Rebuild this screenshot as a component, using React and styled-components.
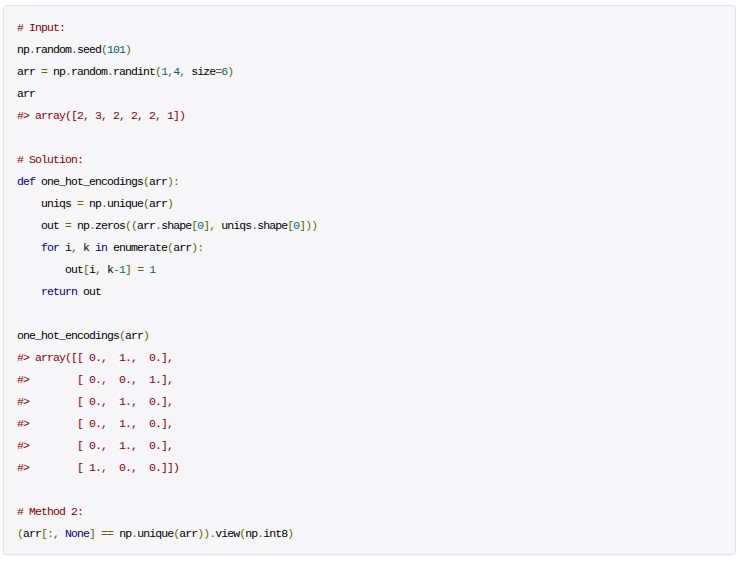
import React from 'react'
import styled, { createGlobalStyle } from 'styled-components'

const GlobalStyle = createGlobalStyle`
  body {
    margin: 0;
    background: #ffffff;
  }
`

const Page = styled.div`
  padding: 5px 4px 6px 3px;
`

const CodeBlock = styled.div`
  padding: 10px 13px;
  background: #f6f6f8;
  border: 1px solid #e1e1e6;
  border-radius: 4px;
  box-shadow: 0 1px 1px rgba(0, 0, 0, 0.04);
  font-family: "Liberation Mono", "DejaVu Sans Mono", monospace;
  font-size: 11.5px;
  letter-spacing: -0.9px;
  line-height: 22px;
  color: #000000;
  white-space: pre;
`

const Line = styled.div`
  height: 22px;
  padding-top: 1px;
  box-sizing: border-box;
`

const colors = {
  com: '#880000',
  kwd: '#000088',
  pun: '#666600',
  lit: '#006666',
  pln: '#000000',
}

const Tok = styled.span`
  color: ${p => colors[p.$k] || colors.pln};
`

// each line is a list of [kind, text] pairs
const lines = [
  [['com', '# Input:']],
  [['pln', 'np'], ['pun', '.'], ['pln', 'random'], ['pun', '.'], ['pln', 'seed'], ['pun', '('], ['lit', '101'], ['pun', ')']],
  [['pln', 'arr '], ['pun', '='], ['pln', ' np'], ['pun', '.'], ['pln', 'random'], ['pun', '.'], ['pln', 'randint'], ['pun', '('], ['lit', '1'], ['pun', ','], ['lit', '4'], ['pun', ','], ['pln', ' size'], ['pun', '='], ['lit', '6'], ['pun', ')']],
  [['pln', 'arr']],
  [['com', '#> array([2, 3, 2, 2, 2, 1])']],
  [],
  [['com', '# Solution:']],
  [['kwd', 'def'], ['pln', ' one_hot_encodings'], ['pun', '('], ['pln', 'arr'], ['pun', '):']],
  [['pln', '    uniqs '], ['pun', '='], ['pln', ' np'], ['pun', '.'], ['pln', 'unique'], ['pun', '('], ['pln', 'arr'], ['pun', ')']],
  [['pln', '    out '], ['pun', '='], ['pln', ' np'], ['pun', '.'], ['pln', 'zeros'], ['pun', '(('], ['pln', 'arr'], ['pun', '.'], ['pln', 'shape'], ['pun', '['], ['lit', '0'], ['pun', '],'], ['pln', ' uniqs'], ['pun', '.'], ['pln', 'shape'], ['pun', '['], ['lit', '0'], ['pun', ']))']],
  [['pln', '    '], ['kwd', 'for'], ['pln', ' i'], ['pun', ','], ['pln', ' k '], ['kwd', 'in'], ['pln', ' enumerate'], ['pun', '('], ['pln', 'arr'], ['pun', '):']],
  [['pln', '        out'], ['pun', '['], ['pln', 'i'], ['pun', ','], ['pln', ' k'], ['pun', '-'], ['lit', '1'], ['pun', ']'], ['pln', ' '], ['pun', '='], ['pln', ' '], ['lit', '1']],
  [['pln', '    '], ['kwd', 'return'], ['pln', ' out']],
  [],
  [['pln', 'one_hot_encodings'], ['pun', '('], ['pln', 'arr'], ['pun', ')']],
  [['com', '#> array([[ 0.,  1.,  0.],']],
  [['com', '#>        [ 0.,  0.,  1.],']],
  [['com', '#>        [ 0.,  1.,  0.],']],
  [['com', '#>        [ 0.,  1.,  0.],']],
  [['com', '#>        [ 0.,  1.,  0.],']],
  [['com', '#>        [ 1.,  0.,  0.]])']],
  [],
  [['com', '# Method 2:']],
  [['pun', '('], ['pln', 'arr'], ['pun', '[:,'], ['pln', ' '], ['kwd', 'None'], ['pun', ']'], ['pln', ' '], ['pun', '=='], ['pln', ' np'], ['pun', '.'], ['pln', 'unique'], ['pun', '('], ['pln', 'arr'], ['pun', ')).'], ['pln', 'view'], ['pun', '('], ['pln', 'np'], ['pun', '.'], ['pln', 'int8'], ['pun', ')']],
]

const App = () => {
  return (
    <Page>
      <GlobalStyle />
      <CodeBlock>
        {lines.map((line, i) => (
          <Line key={i}>
            {line.map(([k, t], j) => (
              <Tok key={j} $k={k}>{t}</Tok>
            ))}
          </Line>
        ))}
      </CodeBlock>
    </Page>
  )
}

export default App
